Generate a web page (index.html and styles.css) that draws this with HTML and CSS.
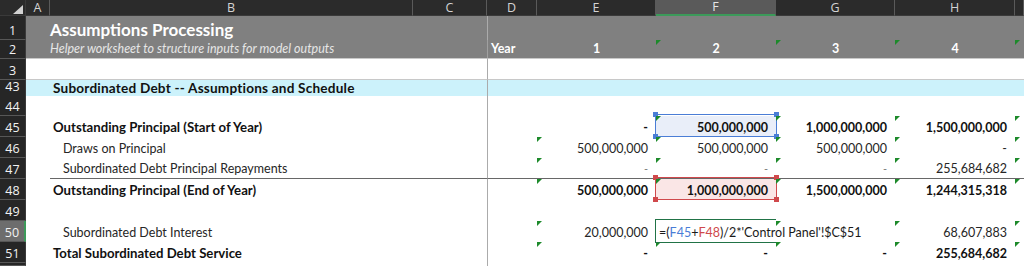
FILE: index.html
```html
<!DOCTYPE html>
<html lang="en">
<head>
    <meta charset="UTF-8">
    <title>Assumptions Processing</title>
    <link rel="stylesheet" href="styles.css">
</head>
<body>
    <div class="sheet">
        <!-- Column headers -->
        <div class="row colhead">
            <div class="ch corner"><svg width="10" height="9" viewBox="0 0 10 9"><polygon points="0,9 10,9 10,0" fill="#d2d2d2"/></svg></div>
            <div class="ch">A</div>
            <div class="ch">B</div>
            <div class="ch">C</div>
            <div class="ch">D</div>
            <div class="ch">E</div>
            <div class="ch sel">F</div>
            <div class="ch">G</div>
            <div class="ch">H</div>
            <div class="ch"></div>
        </div>

        <!-- Frozen header band -->
        <div class="row band r1">
            <div class="rh">1</div>
            <div class="cell"></div>
            <div class="cell title">Assumptions Processing</div>
            <div class="cell"></div>
            <div class="cell d"></div>
            <div class="cell"></div>
            <div class="cell"></div>
            <div class="cell"></div>
            <div class="cell"></div>
            <div class="cell"></div>
        </div>
        <div class="row band r2">
            <div class="rh">2</div>
            <div class="cell"></div>
            <div class="cell subtitle">Helper worksheet to structure inputs for model outputs</div>
            <div class="cell"></div>
            <div class="cell d year">Year</div>
            <div class="cell yr">1</div>
            <div class="cell yr flag">2</div>
            <div class="cell yr flag">3</div>
            <div class="cell yr flag">4</div>
            <div class="cell flag"></div>
        </div>
        <div class="row r3">
            <div class="rh">3</div>
            <div class="cell"></div>
            <div class="cell"></div>
            <div class="cell"></div>
            <div class="cell d"></div>
            <div class="cell"></div>
            <div class="cell"></div>
            <div class="cell"></div>
            <div class="cell"></div>
            <div class="cell"></div>
        </div>

        <!-- Schedule -->
        <div class="row section">
            <div class="rh">43</div>
            <div class="cell"></div>
            <div class="cell bold lbl">Subordinated Debt -- Assumptions and Schedule</div>
            <div class="cell"></div>
            <div class="cell d"></div>
            <div class="cell"></div>
            <div class="cell"></div>
            <div class="cell"></div>
            <div class="cell"></div>
            <div class="cell"></div>
        </div>
        <div class="row">
            <div class="rh">44</div>
            <div class="cell"></div>
            <div class="cell"></div>
            <div class="cell"></div>
            <div class="cell d"></div>
            <div class="cell"></div>
            <div class="cell"></div>
            <div class="cell"></div>
            <div class="cell"></div>
            <div class="cell"></div>
        </div>
        <div class="row">
            <div class="rh">45</div>
            <div class="cell"></div>
            <div class="cell bold lbl">Outstanding Principal (Start of Year)</div>
            <div class="cell"></div>
            <div class="cell d"></div>
            <div class="cell num bold">-</div>
            <div class="cell num bold flag ref-blue">500,000,000<span class="box"><i class="h tl"></i><i class="h tr"></i><i class="h bl"></i><i class="h br"></i></span></div>
            <div class="cell num bold flag">1,000,000,000</div>
            <div class="cell num bold flag">1,500,000,000</div>
            <div class="cell flag"></div>
        </div>
        <div class="row">
            <div class="rh">46</div>
            <div class="cell"></div>
            <div class="cell indent">Draws on Principal</div>
            <div class="cell"></div>
            <div class="cell d"></div>
            <div class="cell num flag">500,000,000</div>
            <div class="cell num flag">500,000,000</div>
            <div class="cell num flag">500,000,000</div>
            <div class="cell num flag">-</div>
            <div class="cell flag"></div>
        </div>
        <div class="row rule">
            <div class="rh">47</div>
            <div class="cell"></div>
            <div class="cell indent">Subordinated Debt Principal Repayments</div>
            <div class="cell"></div>
            <div class="cell d"></div>
            <div class="cell num dash flag">-</div>
            <div class="cell num dash flag">-</div>
            <div class="cell num dash flag">-</div>
            <div class="cell num flag">255,684,682</div>
            <div class="cell flag"></div>
        </div>
        <div class="row">
            <div class="rh">48</div>
            <div class="cell"></div>
            <div class="cell bold lbl">Outstanding Principal (End of Year)</div>
            <div class="cell"></div>
            <div class="cell d"></div>
            <div class="cell num bold flag">500,000,000</div>
            <div class="cell num bold flag ref-red">1,000,000,000<span class="box"><i class="h tl"></i><i class="h tr"></i><i class="h bl"></i><i class="h br"></i></span></div>
            <div class="cell num bold flag">1,500,000,000</div>
            <div class="cell num bold flag">1,244,315,318</div>
            <div class="cell flag"></div>
        </div>
        <div class="row">
            <div class="rh">49</div>
            <div class="cell"></div>
            <div class="cell"></div>
            <div class="cell"></div>
            <div class="cell d"></div>
            <div class="cell"></div>
            <div class="cell"></div>
            <div class="cell"></div>
            <div class="cell"></div>
            <div class="cell"></div>
        </div>
        <div class="row">
            <div class="rh active">50</div>
            <div class="cell"></div>
            <div class="cell indent">Subordinated Debt Interest</div>
            <div class="cell"></div>
            <div class="cell d"></div>
            <div class="cell num flag">20,000,000</div>
            <div class="cell editing"><span class="formula">=(<span class="ref-b">F45</span>+<span class="ref-r">F48</span>)/2*'Control Panel'!$C$51</span><span class="edit-box"></span></div>
            <div class="cell flag"></div>
            <div class="cell num flag">68,607,883</div>
            <div class="cell flag"></div>
        </div>
        <div class="row">
            <div class="rh">51</div>
            <div class="cell"></div>
            <div class="cell bold lbl">Total Subordinated Debt Service</div>
            <div class="cell"></div>
            <div class="cell d"></div>
            <div class="cell num bold flag">-</div>
            <div class="cell num bold flag">-</div>
            <div class="cell num bold flag">-</div>
            <div class="cell num bold flag">255,684,682</div>
            <div class="cell flag"></div>
        </div>
        <div class="row r52">
            <div class="rh"></div>
            <div class="cell"></div>
            <div class="cell"></div>
            <div class="cell"></div>
            <div class="cell d"></div>
            <div class="cell"></div>
            <div class="cell"></div>
            <div class="cell"></div>
            <div class="cell"></div>
            <div class="cell"></div>
        </div>
    </div>
</body>
</html>
```

FILE: styles.css
```css
* {
    box-sizing: border-box;
}

body {
    margin: 0;
    background: #ffffff;
    font-family: Lato, "Liberation Sans", sans-serif;
    font-size: 12.5px;
    color: #262626;
    overflow: hidden;
}

.sheet {
    width: 1024px;
}

.row {
    display: grid;
    grid-template-columns: 26px 24px 363px 74px 50px 119px 120px 119px 120px 9px;
    height: 21px;
}

/* Column headers */
.colhead {
    height: 16px;
    background: #2b2b2b;
}

.ch {
    display: flex;
    align-items: center;
    justify-content: center;
    color: #d4d4d4;
    font-family: "Open Sans", sans-serif;
    font-size: 12.5px;
    line-height: 14px;
    border-right: 1px solid #5a5a5a;
    border-bottom: 1px solid #3a3a3a;
}

.ch.corner {
    align-items: flex-end;
    justify-content: flex-end;
    padding: 0 2px 1px 0;
    border-right: 1px solid #3a3a3a;
}

.ch.sel {
    background: #5a5a5a;
    color: #e6e6e6;
    border-bottom: 2px solid #3c9a5a;
}

/* Row headers */
.rh {
    display: flex;
    align-items: flex-end;
    justify-content: center;
    padding-bottom: 1px;
    background: #262626;
    color: #f2f2f2;
    font-family: "Open Sans", sans-serif;
    font-size: 12.5px;
    line-height: 14px;
    border-bottom: 1px solid #575757;
    border-right: 1px solid #3a3a3a;
}

.rh.active {
    background: #6d6d6d;
    border-right: 2px solid #3c9a5a;
}

/* Cells */
.cell {
    position: relative;
    display: flex;
    align-items: flex-end;
    padding: 0 3px 2px;
    white-space: nowrap;
    line-height: 15px;
}

.d {
    border-left: 1px solid #ababab;
}

.num {
    justify-content: flex-end;
    padding-right: 8px;
}

.bold {
    font-weight: bold;
    color: #111111;
}

.lbl {
    font-size: 13.2px;
}

.section .lbl {
    font-size: 13.6px;
    letter-spacing: 0.2px;
}

.indent {
    padding-left: 13px;
}

.dash {
    color: #7a7a7a;
    font-size: 11px;
}

.flag::before {
    content: "";
    position: absolute;
    left: 0;
    top: 0;
    border-top: 5px solid #1d8a2b;
    border-right: 5px solid transparent;
    z-index: 3;
}

/* Frozen band */
.band .cell {
    background: #808080;
}

.r1 {
    height: 24px;
}

.r2 {
    height: 19px;
}

.r2 .cell {
    border-bottom: 1px solid #c9c9c9;
}

.r2 .cell.d {
    border-left-color: #a0a0a0;
}

.title {
    color: #ffffff;
    font-size: 17px;
    font-weight: bold;
    padding-left: 0;
    padding-bottom: 3px;
}

.subtitle {
    color: #e6e6e6;
    font-style: italic;
    font-size: 12.5px;
    padding-left: 0;
    padding-bottom: 2px;
}

.year,
.yr {
    color: #ffffff;
    font-weight: bold;
}

.yr {
    justify-content: center;
}

.r3 .cell {
    border-bottom: 1px solid #c8c8c8;
}

.section {
    height: 15px;
}

.section .cell {
    background: #ccf2fb;
    padding-bottom: 0;
}

.rule .cell:nth-child(n+3) {
    border-bottom: 1px solid #676767;
}

.r52 {
    height: 3px;
}

/* Formula reference highlights */
.ref-blue {
    background: #e9eef9;
}

.ref-red {
    background: #fae6e6;
}

.box {
    position: absolute;
    left: -1px;
    right: -1px;
    top: -2px;
    bottom: 0;
    border: 1.5px solid #4a7dd6;
    z-index: 2;
}

.ref-red .box {
    border-color: #d0494c;
}

.h {
    position: absolute;
    width: 5px;
    height: 5px;
    background: #4a7dd6;
}

.ref-red .h {
    background: #d0494c;
}

.tl { left: -3px; top: -3px; }
.tr { right: -3px; top: -3px; }
.bl { left: -3px; bottom: -3px; }
.br { right: -3px; bottom: -3px; }

/* Cell in edit mode */
.editing {
    overflow: visible;
    padding-left: 3px;
    z-index: 4;
}

.formula {
    color: #1a1a1a;
}

.ref-b {
    color: #4a7dd6;
}

.ref-r {
    color: #d0494c;
}

.edit-box {
    position: absolute;
    left: -1px;
    right: 0;
    top: -2px;
    bottom: -1px;
    border: 1.5px solid #217346;
    border-right: none;
}
```
